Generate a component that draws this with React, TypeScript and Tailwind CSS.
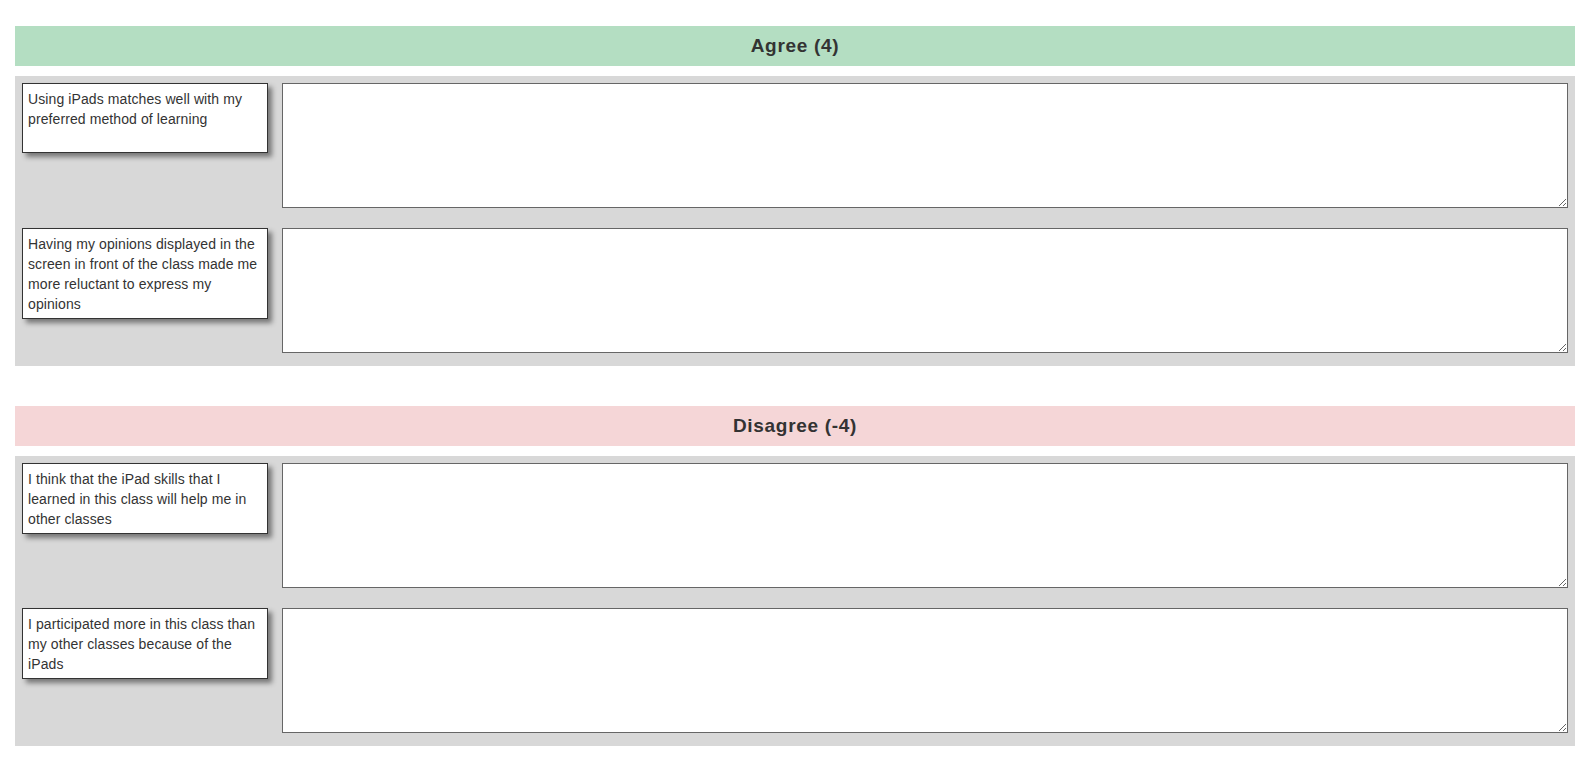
// Q-sort comment page: statements grouped by rating, each with a comment box
import React from 'react';

type Group = {
  title: string;
  tone: 'agree' | 'disagree';
  statements: string[];
};

const groups: Group[] = [
  {
    title: 'Agree (4)',
    tone: 'agree',
    statements: [
      'Using iPads matches well with my preferred method of learning',
      'Having my opinions displayed in the screen in front of the class made me more reluctant to express my opinions',
    ],
  },
  {
    title: 'Disagree (-4)',
    tone: 'disagree',
    statements: [
      'I think that the iPad skills that I learned in this class will help me in other classes',
      'I participated more in this class than my other classes because of the iPads',
    ],
  },
];

const StatementRow: React.FC<{ text: string }> = ({ text }) => (
  <div className="flex items-start gap-[14px]">
    <div className="w-[246px] shrink-0 min-h-[70px] bg-white border border-[#333] px-[5px] pt-[5px] pb-[4px] text-[14px] leading-[20px] tracking-[0.1px] text-[#333] shadow-[4px_4px_5px_rgba(0,0,0,0.45)]">
      {text}
    </div>
    <textarea className="block flex-1 h-[125px] bg-white border border-[#666] outline-none resize" />
  </div>
);

export default function App() {
  return (
    <div
      className="min-h-screen bg-white pt-[26px] pl-[15px] pr-[18px] pb-[20px]"
      style={{ fontFamily: '"Liberation Sans", Arial, Helvetica, sans-serif' }}
    >
      <div className="flex flex-col gap-[40px]">
        {groups.map((group) => (
          <section key={group.title} className="flex flex-col gap-[10px]">
            {/* Header */}
            <div
              className={
                group.tone === 'agree'
                  ? 'h-[40px] flex items-center justify-center bg-[#b4dec2]'
                  : 'h-[40px] flex items-center justify-center bg-[#f5d6d7]'
              }
            >
              <h2 className="text-[19px] font-bold tracking-[0.7px] text-[#333]">{group.title}</h2>
            </div>

            {/* Statements */}
            <div className="bg-[#d8d8d8] pt-[7px] pb-[13px] px-[7px] flex flex-col gap-[20px]">
              {group.statements.map((s) => (
                <StatementRow key={s} text={s} />
              ))}
            </div>
          </section>
        ))}
      </div>
    </div>
  );
}
